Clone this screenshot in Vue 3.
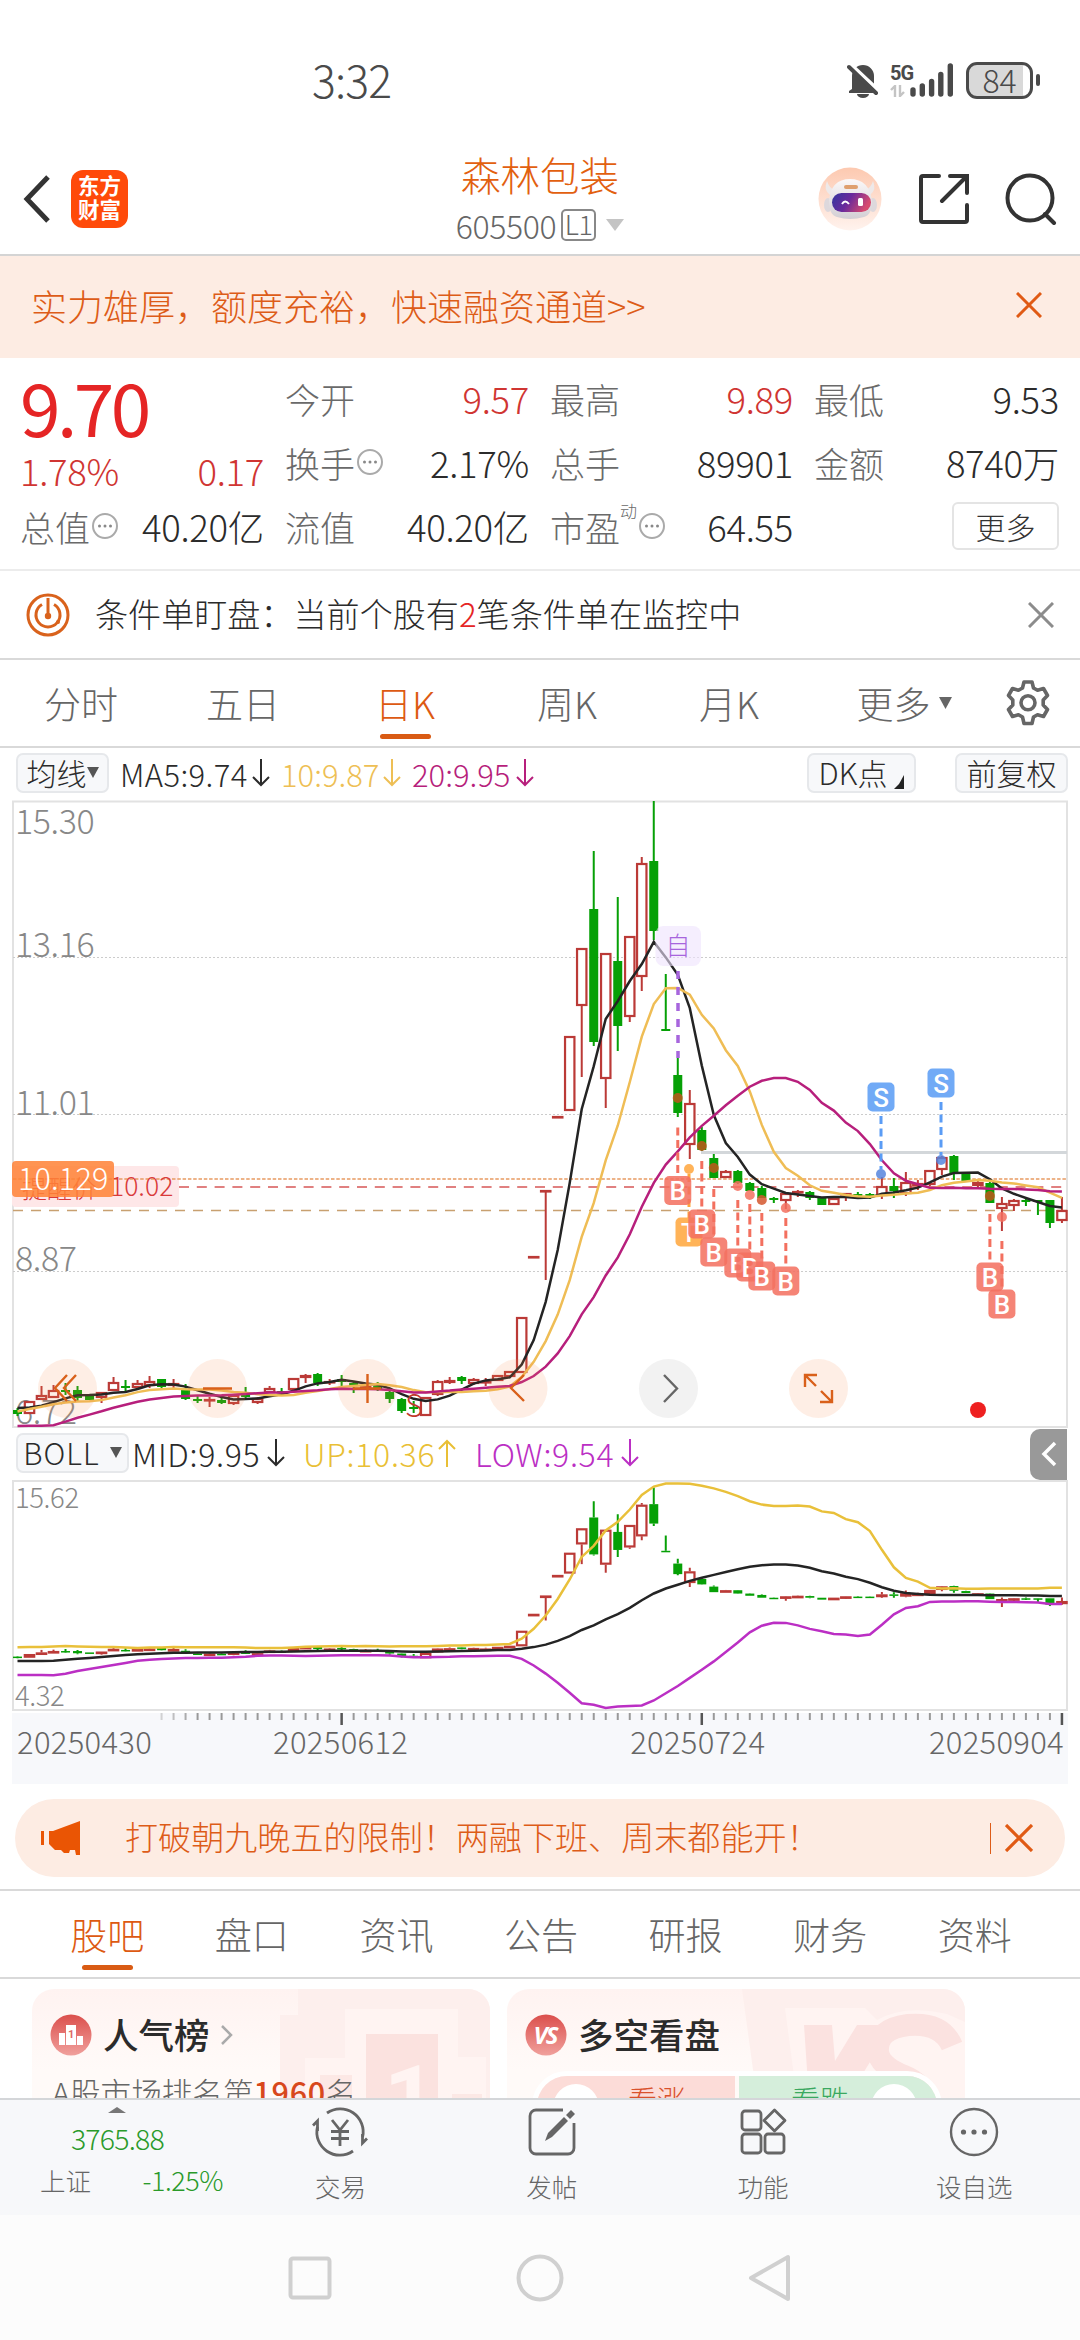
<template>
  <div class="screen">
    <header class="status-bar">
      <span class="clock">3:32</span>
      <div class="status-icons">
        <svg class="bell" width="32" height="36" viewBox="0 0 32 36">
          <path d="M5 27V14a11 11 0 0 1 22 0v13l3 2v2H2v-2z" fill="#4a4a4a" />
          <path d="M10 32h12a6 4 0 0 1-12 0" fill="#4a4a4a" />
          <path d="M1 0L32 29" stroke="#fff" stroke-width="4" />
          <path d="M2 5L29 31" stroke="#4a4a4a" stroke-width="4" stroke-linecap="round" />
        </svg>
        <div class="network">
          <b>5G</b>
          <svg width="15" height="12" viewBox="0 0 15 12" fill="none" stroke="#c4c4c4" stroke-width="2.4">
            <path d="M1 5l4-4v11M14 7l-4 4V0" />
          </svg>
        </div>
        <svg class="signal" width="44" height="34" viewBox="0 0 44 34" stroke="#4a4a4a" stroke-width="5.4" stroke-linecap="round">
          <path d="M3 27v4M12.3 23v8M21.6 18.500v12.500M30.800 11.500v19.500M40.300 3v28" />
        </svg>
        <div class="battery"><span>84</span></div>
        <i class="battery-nub"></i>
      </div>
    </header>

    <nav class="title-bar">
      <div class="title-left">
        <svg width="28" height="48" viewBox="0 0 28 48" fill="none" stroke="#333" stroke-width="5">
          <path d="M25 2L4 24l21 22" />
        </svg>
        <div class="logo"><span>东方</span><span>财富</span></div>
      </div>
      <div class="title-mid">
        <div class="stock-name">森林包装</div>
        <div class="stock-code">
          <span>605500</span><em>L1</em>
          <svg width="18" height="12" viewBox="0 0 18 12"><path d="M0 0h18l-9 12z" fill="#c4c4c4" /></svg>
        </div>
      </div>
      <div class="title-right">
        <svg width="64" height="64" viewBox="0 0 64 64">
          <defs>
            <linearGradient id="halo" x1="0" y1="0" x2="0" y2="1">
              <stop offset="0" stop-color="#fdc9b0" />
              <stop offset="1" stop-color="#fff3ee" />
            </linearGradient>
            <linearGradient id="visor" x1="0" y1="0" x2="1" y2=".3">
              <stop offset="0" stop-color="#33369f" />
              <stop offset=".5" stop-color="#6a2a9c" />
              <stop offset="1" stop-color="#d64a70" />
            </linearGradient>
            <linearGradient id="shell" x1="0" y1="0" x2="0" y2="1">
              <stop offset="0" stop-color="#fbf8f8" />
              <stop offset="1" stop-color="#d3cfd4" />
            </linearGradient>
          </defs>
          <circle cx="32" cy="32" r="31.500" fill="url(#halo)" />
          <path d="M9 14q-4 9 3 14l5-5q-6-2-8-9M55 14q4 9-3 14l-5-5q6-2 8-9" fill="#eee9e9" />
          <ellipse cx="10" cy="38" rx="4" ry="7" fill="#ddd8dc" />
          <ellipse cx="55" cy="38" rx="4" ry="7" fill="#ddd8dc" />
          <path d="M11 34q2-22 21-22t22 22q0 14-8 16-14 4-27 0-8-2-8-16" fill="url(#shell)" />
          <rect x="26" y="18" width="14" height="4" rx="2" fill="#dfa06f" />
          <rect x="14" y="26" width="39" height="19" rx="9.500" fill="url(#visor)" />
          <path d="M24 37q3-5 7 0" fill="none" stroke="#fff" stroke-width="2" />
          <rect x="40" y="31" width="5" height="8" rx="1.500" fill="#fff" />
        </svg>
        <svg class="share" width="50" height="50" viewBox="0 0 50 50" fill="none" stroke="#333" stroke-width="4" stroke-linecap="round">
          <path d="M20 2H4a2 2 0 0 0-2 2v42a2 2 0 0 0 2 2h42a2 2 0 0 0 2-2V31M31 2h17v17M48 2L23 27" />
        </svg>
        <svg width="52" height="52" viewBox="0 0 52 52" fill="none" stroke="#333" stroke-width="4" stroke-linecap="round">
          <circle cx="25" cy="25" r="22.500" />
          <path d="M40 41l9 9" />
        </svg>
      </div>
    </nav>

    <section class="banner">
      <span>实力雄厚，额度充裕，快速融资通道&gt;&gt;</span>
      <svg width="26" height="26" viewBox="0 0 26 26" stroke="#e05a14" stroke-width="3"><path d="M1 1l24 24M25 1L1 25" /></svg>
    </section>

    <section class="quote">
      <div class="quote-col main">
        <div class="price">9.70</div>
        <div class="cell change"><span class="up">1.78%</span><span class="up">0.17</span></div>
        <div class="cell"><label>总值<Dots /></label><span>40.20亿</span></div>
      </div>
      <div v-for="(col, c) in quoteCols" :key="c" class="quote-col">
        <div v-for="item in col" :key="item.label" class="cell">
          <label>{{ item.label }}<sup v-if="item.sup">{{ item.sup }}</sup><Dots v-if="item.tip" /></label>
          <span :class="{ up: item.up }">{{ item.value }}</span>
        </div>
        <div v-if="col.length < 3" class="cell more"><button>更多</button></div>
      </div>
    </section>

    <section class="monitor">
      <svg width="44" height="44" viewBox="0 0 44 44" fill="none" stroke="#d9621c" stroke-width="3">
        <circle cx="22" cy="22" r="20" />
        <path d="M16 11.500a12 12 0 1 0 12 0" />
        <path d="M22 5v15" />
        <circle cx="22" cy="23" r="3.200" fill="#d9621c" stroke="none" />
        <circle cx="32" cy="29" r="2" fill="#d9621c" stroke="none" />
      </svg>
      <p>条件单盯盘：当前个股有<b>2</b>笔条件单在监控中</p>
      <svg width="26" height="26" viewBox="0 0 26 26" stroke="#8c8c8c" stroke-width="3"><path d="M1 1l24 24M25 1L1 25" /></svg>
    </section>

    <nav class="periods">
      <div v-for="p in periods" :key="p" :class="['period', { active: p === '日K' }]">
        {{ p }}<svg v-if="p === '更多'" width="13" height="12" viewBox="0 0 13 12"><path d="M0 0h13L6.500 12z" fill="#666" /></svg>
      </div>
      <svg class="gear" width="44" height="46" viewBox="0 0 44 46" fill="none" stroke="#666" stroke-width="3.600" stroke-linejoin="round">
        <path d="M18 2h8l1.500 6 4 2.300 6-1.800 4 7-4.300 4.500v5l4.300 4.500-4 7-6-1.800-4 2.300-1.500 6.500h-8L16.500 37l-4-2.300-6 1.800-4-7L6.800 25v-5l-4.300-4.500 4-7 6 1.800 4-2.300z" />
        <circle cx="22" cy="22.800" r="7" />
      </svg>
    </nav>

    <section class="legend ma">
      <span class="chip ma-chip">均线<i class="tri"></i></span>
      <span class="ind k">MA5:9.74<Arrow /></span>
      <span class="ind y">10:9.87<Arrow /></span>
      <span class="ind m">20:9.95<Arrow /></span>
      <span class="chip dk">DK点<i class="corner"></i></span>
      <span class="chip fq">前复权</span>
    </section>

    <svg class="k-chart" width="1080" height="628" viewBox="0 800 1080 628">
      <rect x="13" y="801.500" width="1054" height="625.500" fill="none" stroke="#e2e2e2" stroke-width="2" />
      <path d="M13 957.500h1054M13 1114.500h1054M13 1271.500h1054" stroke="#ccc" stroke-dasharray="2 2" />
      <path d="M701 1152.500H1067" stroke="#d3d7da" stroke-width="3" />
      <path d="M13 1210.500H1067" stroke="#c8a070" stroke-width="1.300" stroke-dasharray="10 8" />
      <rect x="12" y="1166" width="167" height="41" rx="4" fill="#fee7e8" />
      <path d="M179 1187H1067" stroke="#e08080" stroke-width="2" stroke-dasharray="10 7.800" />
      <path d="M13 1179H1067" stroke="#e89a62" stroke-width="1.700" stroke-dasharray="3.500 1.800" />
      <g class="scale">
        <text x="15" y="834">15.30</text>
        <text x="15" y="957">13.16</text>
        <text x="15" y="1115">11.01</text>
        <text x="15" y="1271">8.87</text>
        <text x="15" y="1424">6.72</text>
      </g>
      <text class="remind" x="22" y="1198">提醒价</text>
      <text class="remind num" x="110" y="1196">10.02</text>
      <rect x="12" y="1161" width="102" height="36" rx="4" fill="#ff8237" fill-opacity=".86" />
      <text class="cost" x="18" y="1190">10.129</text>

      <g v-for="b in candles" :key="b.i">
        <path :d="`M${b.x} ${b.high}V${b.top}M${b.x} ${b.bottom}V${b.low}`" :stroke="b.color" stroke-width="2" />
        <rect v-if="b.red" :x="b.x - 4.700" :y="b.top + 1" width="9.400" :height="Math.max(b.bottom - b.top - 2, .5)" fill="#fff" :stroke="b.color" stroke-width="2.200" />
        <rect v-else :x="b.x - 4.500" :y="b.top" width="9" :height="Math.max(b.bottom - b.top, 2)" :fill="b.color" />
      </g>
      <g clip-path="url(#k-clip)" fill="none" stroke-width="2.500">
        <polyline :points="line(ma5)" stroke="#242424" />
        <polyline :points="line(ma10)" stroke="#efbd55" />
        <polyline :points="line(ma20)" stroke="#b71f7c" />
      </g>
      <clipPath id="k-clip"><rect x="13" y="801" width="1054" height="627" /></clipPath>
      <text x="405" y="1417" class="s-mark">S</text>

      <g v-for="m in marks" :key="m.x + m.t">
        <path :d="`M${m.x} ${m.from}V${m.to}`" :stroke="m.c" stroke-width="3" stroke-dasharray="8 4.500" />
        <circle :cx="m.x" :cy="m.dot" r="5" :fill="m.d || m.c" fill-opacity=".85" />
        <rect :x="m.x - 13.500" :y="m.y - 14.500" width="27" height="29" rx="5" :fill="m.c" fill-opacity=".86" />
        <text :x="m.x" :y="m.y + 9.500" class="mark-text">{{ m.t }}</text>
      </g>
      <rect x="655.500" y="926" width="45.500" height="40" rx="8" fill="#efe2fd" fill-opacity=".6" />
      <text x="678" y="955" class="self-mark">自</text>
      <path d="M678 971V1058" stroke="#a765dd" stroke-width="3.500" stroke-dasharray="8 8" />

      <g fill="#fb8a50" fill-opacity=".15">
        <circle v-for="cx in [67.5, 217.500, 367.500, 518, 818.500]" :key="cx" :cx="cx" cy="1388.500" r="29.500" />
      </g>
      <circle cx="668.500" cy="1388.500" r="29.500" fill="#f2f2f2" />
      <g fill="none" stroke="#d9601a" stroke-width="2.400">
        <path d="M67 1375l-12 13 12 13M76 1375l-12 13 12 13" />
        <path d="M203 1388.500h29M353 1388.500h28M367.500 1374v29" />
        <path d="M524 1375l-13 13 13 13" />
        <path d="M664 1375l13 13.500-13 13.500" stroke="#666" />
        <path d="M805 1387v-12h12M806 1376l10 10M832 1390v12h-12M831 1401l-10-10" />
      </g>
      <circle cx="978" cy="1410" r="8" fill="#ee2020" />
    </svg>

    <section class="legend boll">
      <span class="chip boll-chip">BOLL<i class="tri"></i></span>
      <span class="ind k">MID:9.95<Arrow /></span>
      <span class="ind g">UP:10.36<Arrow up /></span>
      <span class="ind p">LOW:9.54<Arrow /></span>
      <span class="collapse">
        <svg width="16" height="26" viewBox="0 0 16 26" fill="none" stroke="#fff" stroke-width="3.500"><path d="M14 2L3 13l11 11" /></svg>
      </span>
    </section>

    <svg class="boll-chart" width="1080" height="232" viewBox="0 1480 1080 232">
      <rect x="13" y="1481" width="1054" height="229" fill="none" stroke="#e2e2e2" stroke-width="2" />
      <g class="scale small">
        <text x="15" y="1508">15.62</text>
        <text x="15" y="1706">4.32</text>
      </g>
      <g v-for="b in bollCandles" :key="b.i">
        <path :d="`M${b.x} ${b.high}V${b.top}M${b.x} ${b.bottom}V${b.low}`" :stroke="b.color" stroke-width="2" />
        <rect v-if="b.red" :x="b.x - 4.700" :y="b.top + 1" width="9.400" :height="Math.max(b.bottom - b.top - 2, .5)" fill="#fff" :stroke="b.color" stroke-width="2.200" />
        <rect v-else :x="b.x - 4.500" :y="b.top" width="9" :height="Math.max(b.bottom - b.top, 1.500)" :fill="b.color" />
      </g>
      <g clip-path="url(#boll-clip)" fill="none" stroke-width="2.500">
        <polyline :points="line(boll.mid)" stroke="#242424" />
        <polyline :points="line(boll.up)" stroke="#e9c03a" />
        <polyline :points="line(boll.low)" stroke="#bb2fc4" />
      </g>
      <clipPath id="boll-clip"><rect x="13" y="1480" width="1054" height="231" /></clipPath>
    </svg>

    <section class="axis">
      <svg width="1056" height="14" viewBox="12 0 1056 14">
        <path v-for="t in ticks" :key="t.x" :d="`M${t.x} 0V${t.major ? 12 : 7}`" :stroke="t.major ? '#555' : '#999'" :stroke-width="t.major ? 2.500 : 2" :opacity="t.opacity" />
      </svg>
      <div class="dates">
        <span>20250430</span><span class="d2">20250612</span><span class="d3">20250724</span><span class="d4">20250904</span>
      </div>
    </section>

    <section class="notice">
      <svg width="40" height="34" viewBox="0 0 40 34" fill="#ea5504">
        <path d="M39 0v34h-4l-1-5h-5l-1 3h-5l-3-3h-6l-6-6V10h4z" />
        <path d="M0 10h3v14H0z" />
      </svg>
      <p>打破朝九晚五的限制！两融下班、周末都能开！</p>
      <i></i>
      <svg width="28" height="28" viewBox="0 0 28 28" stroke="#e05a14" stroke-width="3.200"><path d="M1 1l26 26M27 1L1 27" /></svg>
    </section>

    <nav class="tabs">
      <div v-for="(t, n) in tabs" :key="t" :class="['tab', { active: n === 0 }]">{{ t }}</div>
    </nav>

    <section class="cards">
      <div class="card">
        <svg class="watermark" width="458" height="110" viewBox="32 1989 458 110">
          <path d="M298 1989h192v110H280v-84h18z" fill="#fdefed" />
          <path d="M345 2009h113v48h28v42H305v-41h40z" fill="#fff4f2" />
          <path d="M366 2034h72v65h-72z" fill="#fbe2df" />
          <path d="M320 2075h32v24h-32zM452 2094h30v5h-30z" fill="#fce8e5" />
          <text x="384" y="2130" class="wm-one">1</text>
        </svg>
        <h3>
          <svg width="42" height="42" viewBox="0 0 42 42">
            <circle cx="21" cy="21" r="20.500" fill="url(#badge)" />
            <path d="M9 19h6v12H9zM16 11h10v20H16zM27 22h6v9h-6z" fill="#fff" />
            <text x="18" y="24" class="badge-one">1</text>
          </svg>
          <span>人气榜</span>
          <svg class="chev" width="12" height="20" viewBox="0 0 12 20" fill="none" stroke="#aaa" stroke-width="2.500"><path d="M1 1l9 9-9 9" /></svg>
        </h3>
        <p class="rank">A股市场排名第<b>1960</b>名</p>
      </div>
      <div class="card">
        <svg class="watermark" width="458" height="110" viewBox="507 1989 458 110">
          <path d="M742 1989h223v110H757z" fill="#fdefed" />
          <path d="M785 2008h80l12 12q28-16 70-6l18 8v77H797z" fill="#fff4f2" />
          <path d="M804 2025h28l3 36 22-36h36l-46 74h-38z" fill="#fbe2e0" />
          <path d="M952 2046q-10-24-44-21-32 4-30 27 2 14 26 24 20 8 16 20" fill="none" stroke="#fbe2e0" stroke-width="22" />
        </svg>
        <h3>
          <svg width="42" height="42" viewBox="0 0 42 42">
            <defs>
              <linearGradient id="badge" x1="0" y1="0" x2="0" y2="1">
                <stop offset="0" stop-color="#db4f4c" />
                <stop offset="1" stop-color="#f0a09c" />
              </linearGradient>
            </defs>
            <circle cx="21" cy="21" r="20.500" fill="url(#badge)" />
            <text x="20" y="30" class="badge-vs">VS</text>
          </svg>
          <span>多空看盘</span>
        </h3>
        <div class="vote">
          <div class="bull"><i></i><span>看涨</span></div>
          <div class="bear"><span>看跌</span><i></i></div>
        </div>
      </div>
    </section>

    <footer class="toolbar">
      <div class="index">
        <i></i>
        <span class="index-value">3765.88</span>
        <div class="index-row"><span>上证</span><span class="down">-1.25%</span></div>
      </div>
      <div class="tool">
        <svg width="56" height="50" viewBox="0 0 56 50" fill="none" stroke="#666" stroke-width="2.800">
          <path d="M15 6a23 23 0 0 1 35.600 24M41 44A23 23 0 0 1 5.400 20" />
          <path d="M5.500 24V14L1 18.500M50.500 27v9l4.500-4.500" />
          <path d="M20 13l8 10 8-10M28 23v16M19 24.500h18M19 31.500h18" />
        </svg>
        <span>交易</span>
      </div>
      <div class="tool">
        <svg width="50" height="50" viewBox="0 0 50 50" fill="none" stroke="#666" stroke-width="2.800">
          <path d="M36 3H9a6 6 0 0 0-6 6v32a6 6 0 0 0 6 6h32a6 6 0 0 0 6-6V16" />
          <path d="M18 34l3-8 16-16 4 4-16 16zM39 8l5-5 4 4-5 5z" fill="#666" stroke="none" />
        </svg>
        <span>发帖</span>
      </div>
      <div class="tool">
        <svg width="50" height="50" viewBox="0 0 50 50" fill="none" stroke="#666" stroke-width="2.800" stroke-linejoin="round">
          <rect x="4" y="4" width="19" height="19" rx="3" />
          <rect x="4" y="27" width="19" height="19" rx="3" />
          <rect x="27" y="27" width="19" height="19" rx="3" />
          <path d="M36.500 3L47 13.500 36.500 24 26 13.500z" />
        </svg>
        <span>功能</span>
      </div>
      <div class="tool">
        <svg width="50" height="50" viewBox="0 0 50 50" fill="none" stroke="#666" stroke-width="2.400">
          <circle cx="25" cy="25" r="23" />
          <g fill="#666" stroke="none">
            <circle cx="14.500" cy="25" r="2.600" />
            <circle cx="25" cy="25" r="2.600" />
            <circle cx="35.500" cy="25" r="2.600" />
          </g>
        </svg>
        <span>设自选</span>
      </div>
    </footer>

    <div class="system-nav">
      <svg width="48" height="48" viewBox="0 0 48 48"><rect x="4.500" y="4.500" width="39" height="39" rx="2.500" /></svg>
      <svg width="48" height="48" viewBox="0 0 48 48"><circle cx="24" cy="24" r="21.500" /></svg>
      <svg width="48" height="48" viewBox="0 0 48 48"><path d="M42 3v42L5 24z" /></svg>
    </div>
  </div>
</template>

<script setup>
import { h } from 'vue'

const Arrow = (props) =>
  h('svg', { width: 18, height: 28, viewBox: '0 0 18 28', fill: 'none', stroke: 'currentColor', 'stroke-width': 2 }, [
    h('path', { d: props.up !== undefined ? 'M9 28V2M1 10l8-8 8 8' : 'M9 0v26M1 18l8 8 8-8' })
  ])
Arrow.props = ['up']

const Dots = () =>
  h('svg', { width: 29, height: 28, viewBox: '0 0 29 28' }, [
    h('circle', { cx: 15, cy: 14, r: 12, fill: 'none', stroke: '#aaa', 'stroke-width': 2 }),
    ...[9.5, 15, 20.5].map((cx) => h('circle', { cx, cy: 14, r: 1.5, fill: '#888' }))
  ])

const quoteCols = [
  [
    { label: '今开', value: '9.57', up: true },
    { label: '换手', value: '2.17%', tip: true },
    { label: '流值', value: '40.20亿' }
  ],
  [
    { label: '最高', value: '9.89', up: true },
    { label: '总手', value: '89901' },
    { label: '市盈', value: '64.55', sup: '动', tip: true }
  ],
  [
    { label: '最低', value: '9.53' },
    { label: '金额', value: '8740万' }
  ]
]

const periods = ['分时', '五日', '日K', '周K', '月K', '更多']
const tabs = ['股吧', '盘口', '资讯', '公告', '研报', '财务', '资料']

// [r = rising / g = falling, high, body top, body bottom, low]
const bars = [
  ['g', 1408, 1410, 1414, 1416], ['r', 1401, 1401, 1414, 1414], ['r', 1386, 1395, 1400, 1400],
  ['r', 1385, 1390, 1398, 1398], ['g', 1383, 1390, 1392, 1395], ['g', 1386, 1390, 1398, 1402],
  ['g', 1395, 1395, 1400, 1400], ['r', 1392, 1392, 1398, 1403], ['r', 1377, 1382, 1391, 1391],
  ['g', 1380, 1386, 1388, 1391], ['r', 1380, 1383, 1388, 1389], ['r', 1376, 1381, 1386, 1388],
  ['g', 1379, 1379, 1387, 1388], ['r', 1379, 1383, 1386, 1390], ['g', 1384, 1389, 1399, 1400],
  ['g', 1396, 1399, 1401, 1403], ['r', 1397, 1399, 1400, 1407], ['g', 1398, 1400, 1403, 1404],
  ['r', 1394, 1395, 1404, 1405], ['g', 1387, 1395, 1397, 1400], ['r', 1397, 1398, 1403, 1404],
  ['r', 1386, 1388, 1393, 1393], ['g', 1388, 1391, 1393, 1394], ['r', 1378, 1378, 1390, 1390],
  ['r', 1374, 1375, 1378, 1383], ['g', 1373, 1374, 1383, 1386], ['r', 1379, 1381, 1383, 1385],
  ['g', 1375, 1379, 1382, 1386], ['g', 1382, 1383, 1386, 1393], ['r', 1384, 1386, 1388, 1390],
  ['g', 1382, 1386, 1389, 1391], ['g', 1391, 1392, 1399, 1403], ['g', 1398, 1399, 1411, 1413],
  ['g', 1401, 1407, 1409, 1413], ['r', 1397, 1397, 1416, 1416], ['r', 1380, 1381, 1395, 1396],
  ['r', 1377, 1380, 1383, 1384], ['g', 1376, 1377, 1381, 1384], ['r', 1378, 1379, 1384, 1385],
  ['r', 1378, 1381, 1383, 1386], ['r', 1375, 1375, 1381, 1381], ['r', 1371, 1371, 1377, 1377],
  ['r', 1317, 1317, 1373, 1373], ['r', 1256, 1256, 1258, 1258], ['r', 1190, 1190, 1192, 1280],
  ['r', 1116, 1116, 1118, 1118], ['r', 1036, 1036, 1111, 1111], ['r', 948, 948, 1006, 1077],
  ['g', 851, 909, 1042, 1046], ['r', 953, 953, 1079, 1108], ['g', 897, 961, 1026, 1051],
  ['r', 936, 936, 1017, 1022], ['r', 857, 863, 977, 991], ['g', 801, 861, 931, 940],
  ['g', 974, 1029, 1031, 1031], ['g', 1058, 1075, 1113, 1117], ['r', 1090, 1103, 1145, 1159],
  ['g', 1127, 1130, 1150, 1151], ['g', 1154, 1158, 1178, 1178], ['r', 1170, 1171, 1178, 1178],
  ['g', 1170, 1171, 1183, 1184], ['g', 1182, 1183, 1191, 1191], ['g', 1186, 1188, 1198, 1198],
  ['g', 1197, 1198, 1200, 1203], ['r', 1192, 1193, 1201, 1209], ['r', 1190, 1191, 1193, 1197],
  ['g', 1191, 1192, 1198, 1200], ['g', 1198, 1198, 1205, 1205], ['r', 1198, 1198, 1205, 1205],
  ['r', 1193, 1193, 1195, 1201], ['g', 1192, 1194, 1196, 1197], ['g', 1193, 1194, 1196, 1199],
  ['r', 1177, 1186, 1196, 1199], ['g', 1178, 1186, 1191, 1198], ['r', 1172, 1182, 1194, 1196],
  ['r', 1180, 1183, 1186, 1190], ['r', 1170, 1170, 1185, 1186], ['r', 1156, 1157, 1170, 1175],
  ['g', 1155, 1156, 1173, 1180], ['g', 1173, 1174, 1181, 1181], ['r', 1181, 1182, 1186, 1188],
  ['g', 1182, 1183, 1203, 1203], ['r', 1197, 1203, 1209, 1231], ['r', 1199, 1200, 1206, 1211],
  ['g', 1197, 1200, 1202, 1206], ['g', 1200, 1200, 1202, 1215], ['g', 1200, 1200, 1223, 1228],
  ['r', 1197, 1210, 1221, 1223]
]

// closes of the sessions just before the visible range
const history = [7.0, 7.15, 7.1, 6.2, 6.05, 6.25, 6.3, 6.35, 6.45, 6.5, 6.75, 6.85, 6.9, 6.95, 7.0, 7.05, 7.05, 6.98, 6.95]

const barX = (i) => 17.5 + 12.005 * i
const toPrice = (y) => 15.3 - (y - 801) / 73
const kY = (p) => 801 + (15.3 - p) * 73
const bollY = (p) => 1481 + (15.62 - p) * 20.27

const candles = bars.map(([dir, high, top, bottom, low], i) => ({
  i, x: barX(i), red: dir === 'r', color: dir === 'r' ? '#bb3a37' : '#06a006', high, top, bottom, low
}))

const bollCandles = candles.map((b) => ({
  ...b,
  high: bollY(toPrice(b.high)),
  top: bollY(toPrice(b.top)),
  bottom: bollY(toPrice(b.bottom)),
  low: bollY(toPrice(b.low))
}))

const closes = [...history, ...candles.map((b) => toPrice(b.red ? b.top : b.bottom))]
const mean = (list) => list.reduce((a, b) => a + b, 0) / list.length
const windowAt = (i, n) => closes.slice(i + 20 - n, i + 20)
const average = (n) => candles.map((b) => kY(mean(windowAt(b.i, n))))

const ma5 = average(5)
const ma10 = average(10)
const ma20 = average(20)

const boll = { mid: [], up: [], low: [] }
candles.forEach((b) => {
  const w = windowAt(b.i, 20)
  const m = mean(w)
  const sd = Math.sqrt(mean(w.map((v) => (v - m) ** 2)))
  boll.mid.push(bollY(m))
  boll.up.push(Math.max(bollY(m + 2 * sd), 1481))
  boll.low.push(Math.min(bollY(m - 2 * sd), 1710))
})

const line = (ys) => ys.map((y, i) => `${barX(i).toFixed(1)},${y.toFixed(1)}`).join(' ')

const buy = (i, y, dot, d) => ({ x: barX(i), y, dot, from: y - 63, to: y - 14, t: 'B', c: '#f3705f', d })
const marks = [
  { x: 689, y: 1232, dot: 1169, from: 1174, to: 1218, t: 'T', c: '#ffa63c' },
  buy(55, 1190.5, 1098, '#c0561c'),
  buy(57, 1224, 1146, '#c0561c'),
  buy(58, 1252, 1168, '#c0561c'),
  buy(60, 1263, 1186),
  buy(61, 1267, 1195),
  buy(62, 1276, 1200, '#d3572e'),
  buy(64, 1281, 1208),
  buy(81, 1277, 1196, '#c0561c'),
  buy(82, 1304, 1217),
  { x: 881, y: 1097, dot: 1174, from: 1116, to: 1169, t: 'S', c: '#5a9cf5', d: '#5585dd' },
  { x: 941, y: 1083, dot: 1160, from: 1102, to: 1155, t: 'S', c: '#5a9cf5', d: '#5585dd' }
]

const ticks = candles.slice(12).map((b) => ({
  x: b.x,
  major: [27, 57, 87].includes(b.i),
  opacity: Math.min(1, (b.i - 10) / 5)
}))
</script>

<style>
body {
  margin: 0;
  background: #fff;
}
</style>

<style scoped>
.screen {
  width: 1080px;
  height: 2340px;
  overflow: hidden;
  display: flex;
  flex-direction: column;
  background: #fff;
  color: #2b2b2b;
  font-family: "Noto Sans CJK SC", "Noto Sans", sans-serif;
  font-weight: 300;
}

.screen > * {
  flex-shrink: 0;
  box-sizing: border-box;
}

svg {
  display: block;
  flex-shrink: 0;
}

i,
em {
  font-style: normal;
}

p,
h3 {
  margin: 0;
  font-weight: inherit;
}

.status-bar {
  height: 151px;
  padding: 14px 40px 0 312px;
  display: flex;
  justify-content: space-between;
  align-items: flex-start;
  color: #4a4a4a;
}

.clock {
  font-size: 44.5px;
  letter-spacing: -.8px;
  line-height: 130px;
}

.status-icons {
  display: flex;
  align-items: center;
  height: 132px;
}

.network {
  width: 24px;
  margin: 0 -4px 0 11px;
}

.network b {
  display: block;
  font: bold 20px/20px "Roboto", sans-serif;
  letter-spacing: -1px;
}

.network svg {
  margin-top: 2px;
}

.signal {
  margin: 0 12px 0 0;
}

.battery {
  width: 67px;
  height: 37px;
  box-sizing: border-box;
  border: 3px solid #4a4a4a;
  border-radius: 11px;
  background: linear-gradient(90deg, #d9d9d9 88%, #fff 88%);
  text-align: center;
  font-size: 32px;
  line-height: 28px;
}

.battery-nub {
  width: 4px;
  height: 12px;
  margin-left: 3px;
  border-radius: 2px;
  background: #4a4a4a;
}

.title-bar {
  height: 105px;
  padding: 0 23px;
  display: grid;
  grid-template-columns: 1fr 300px 1fr;
  border-bottom: 2px solid #d4d4d4;
}

.title-left,
.title-right {
  display: flex;
  align-items: center;
  height: 95px;
}

.logo {
  width: 57px;
  height: 58px;
  box-sizing: border-box;
  margin-left: 20px;
  padding-bottom: 3px;
  border-radius: 12px;
  background: #ff4a0a;
  color: #fff;
  font-size: 21.5px;
  font-weight: 700;
  line-height: 24px;
  display: flex;
  flex-direction: column;
  align-items: center;
  justify-content: center;
}

.title-mid {
  text-align: center;
}

.stock-name {
  margin-top: -3px;
  color: #e2600f;
  font-size: 39.5px;
  line-height: 52px;
}

.stock-code {
  display: flex;
  align-items: center;
  justify-content: center;
  margin-top: 3px;
  color: #666;
  font-size: 32px;
  letter-spacing: -.4px;
  line-height: 44px;
}

.stock-code em {
  margin: 0 10px 0 5px;
  width: 31px;
  height: 28px;
  border: 2px solid #888;
  border-radius: 5px;
  font-size: 27px;
  line-height: 26px;
}

.title-right {
  justify-content: flex-end;
}

.share {
  margin: 0 36px 0 37px;
}

.banner {
  height: 102px;
  padding: 0 38px 4px 31px;
  display: flex;
  align-items: center;
  justify-content: space-between;
  background: #fdece3;
  color: #dd5c18;
  font-size: 36px;
}

.quote {
  height: 213px;
  padding: 8px 22px 0 20px;
  display: grid;
  grid-template-columns: 244px 244px 243px 245px;
  column-gap: 21px;
  border-bottom: 2px solid #ececec;
}

.cell {
  height: 64px;
  display: flex;
  align-items: center;
  justify-content: space-between;
  font-size: 36.5px;
  letter-spacing: -.3px;
  white-space: nowrap;
}

.cell label {
  display: flex;
  align-items: center;
  color: #6a6a6a;
  font-size: 35px;
  letter-spacing: 0;
}

.cell sup {
  align-self: flex-start;
  font-size: 17px;
  line-height: 20px;
}

.up {
  color: #d03532;
}

.main .price {
  height: 74px;
  margin-bottom: -2px;
  color: #e52525;
  font-size: 73px;
  font-weight: 400;
  letter-spacing: -3.5px;
  line-height: 78px;
}

.main .change {
  height: 60px;
  margin-bottom: -4px;
  padding-top: 4px;
  box-sizing: border-box;
}

.more {
  justify-content: flex-end;
}

.more button {
  width: 107px;
  height: 48px;
  padding: 0;
  border: 2px solid #e4e4e4;
  border-radius: 6px;
  background: #fff;
  color: #333;
  font: 300 30px/41px "Noto Sans CJK SC", sans-serif;
}

.monitor {
  height: 89px;
  padding: 0 26px 0 26px;
  display: flex;
  align-items: center;
  border-bottom: 2px solid #d9d9d9;
  font-size: 33.1px;
}

.monitor p {
  flex: 1;
  margin: 0 0 4px 25px;
}

.monitor b {
  color: #e52525;
  font-weight: 300;
}

.periods {
  height: 88px;
  display: flex;
  align-items: center;
  border-bottom: 2px solid #d9d9d9;
}

.period {
  width: 162px;
  height: 86px;
  position: relative;
  display: flex;
  align-items: center;
  justify-content: center;
  color: #666;
  font-size: 37px;
}

.period svg {
  margin-left: 8px;
}

.period:nth-child(6) {
  width: 188px;
}

.period.active,
.tab.active {
  color: #dd5a12;
}

.period.active::after,
.tab.active::after {
  content: "";
  position: absolute;
  bottom: 7px;
  left: calc(50% - 25.5px);
  width: 51px;
  height: 5px;
  border-radius: 3px;
  background: #d95b14;
}

.gear {
  margin-left: 8px;
}

.legend {
  height: 53px;
  padding: 0 12px 3px 16px;
  display: flex;
  align-items: center;
  font-size: 31px;
}

.chip {
  height: 40px;
  box-sizing: border-box;
  padding-bottom: 2px;
  display: flex;
  align-items: center;
  justify-content: center;
  border: 2px solid #e6e8eb;
  border-radius: 7px;
  background: #f7f8fa;
  font-size: 30px;
}

.tri {
  border: 6.5px solid transparent;
  border-top: 11px solid #555;
  border-bottom: 0;
}

.ma-chip {
  width: 93px;
}

.ind {
  display: flex;
  align-items: center;
  justify-content: space-between;
  white-space: nowrap;
}

.k {
  width: 150px;
  margin-left: 11px;
  letter-spacing: .4px;
}

.y {
  width: 120px;
  margin-left: 11px;
  color: #eebf55;
}

.ma .m {
  width: 122px;
  margin-left: 11px;
  color: #b71f7c;
}

.dk {
  width: 109px;
  margin-left: auto;
  gap: 7px;
}

.corner {
  margin-top: 20px;
  border: 5px solid #222;
  border-top: 9px solid transparent;
  border-left-color: transparent;
}

.fq {
  width: 113px;
  margin-left: 39px;
}

.k-chart {
  margin-top: -1px;
}

.boll {
  height: 52px;
  padding-right: 13px;
  padding-bottom: 2px;
  font-size: 32px;
  letter-spacing: .7px;
}

.boll-chip {
  width: 113px;
  gap: 10px;
  letter-spacing: 1px;
}

.boll .k {
  margin-left: 3px;
  width: 153px;
  letter-spacing: .7px;
}

.boll .g {
  width: 153px;
  margin-left: 18px;
  color: #e9bf35;
}

.boll .p {
  width: 164px;
  margin-left: 19px;
  color: #bb2fc4;
}

.collapse {
  width: 37px;
  height: 51px;
  margin-left: auto;
  margin-bottom: -2px;
  display: flex;
  align-items: center;
  justify-content: center;
  border-radius: 10px 0 0 10px;
  background: #999;
}

.scale {
  fill: #888;
  font-size: 34px;
  letter-spacing: -.4px;
}

.scale.small {
  font-size: 27.5px;
}

.remind {
  fill: #d93a3a;
  font-size: 25px;
}

.remind.num {
  font-size: 26.5px;
}

.cost {
  fill: #fff;
  font-size: 30.5px;
  letter-spacing: .2px;
}

.s-mark {
  fill: #c0392b;
  font-size: 31px;
}

.mark-text {
  fill: #fff;
  font: 500 26px "Roboto", sans-serif;
  text-anchor: middle;
}

.self-mark {
  fill: #a765dd;
  font-size: 25px;
  text-anchor: middle;
}

.axis {
  height: 71px;
  margin: 1px 12px 0;
  background: #f7f8fb;
}

.dates {
  display: flex;
  padding: 0 4px 0 5px;
  color: #666;
  font-size: 31px;
  letter-spacing: .3px;
  line-height: 28px;
}

.dates .d2 {
  margin-left: 121px;
}

.dates .d3 {
  margin-left: 222px;
}

.dates .d4 {
  margin-left: auto;
}

.notice {
  height: 78px;
  margin: 15px 15px 0;
  padding: 0 32px 0 26px;
  display: flex;
  align-items: center;
  border-radius: 39px;
  background: #fdece3;
  color: #dd5c18;
  font-size: 33.1px;
}

.notice p {
  flex: 1;
  margin: 0 0 4px 44px;
}

.notice i {
  width: 1.5px;
  height: 31px;
  margin-right: 14px;
  background: #dd5c18;
}

.tabs {
  height: 90px;
  margin-top: 12px;
  padding: 0 33px 0 35px;
  display: flex;
  border-top: 2px solid #d9d9d9;
  border-bottom: 2px solid #d9d9d9;
}

.tab {
  flex: 1;
  position: relative;
  display: flex;
  align-items: center;
  justify-content: center;
  color: #666;
  font-size: 37px;
}

.cards {
  height: 119px;
  padding: 10px 32px 0;
  display: flex;
  gap: 17px;
  overflow: hidden;
}

.card {
  width: 458px;
  height: 200px;
  position: relative;
  overflow: hidden;
  border-radius: 22px;
  background: linear-gradient(#fff3f1, #fffaf8 80px);
}

.watermark {
  position: absolute;
  top: 0;
  left: 0;
}

.card h3 {
  position: relative;
  display: flex;
  align-items: center;
  height: 42px;
  margin: 25px 0 0 18px;
  color: #2b2b2b;
  font-size: 35.5px;
  font-weight: 500;
  gap: 11px;
}

.card h3 span {
  margin-bottom: 4px;
}

.rank {
  position: relative;
  margin: 13px 0 0 20px;
  color: #666;
  font-size: 30.6px;
  line-height: 46px;
}

.rank b {
  color: #d8481c;
  font-weight: 500;
  letter-spacing: .6px;
}

.badge-one {
  fill: #dd6a67;
  font: bold 11px "Roboto", sans-serif;
}

.badge-vs {
  fill: #fff;
  font: italic bold 24px "Open Sans", sans-serif;
  letter-spacing: -2px;
  text-anchor: middle;
}

.wm-one {
  fill: #fff4f2;
  font: bold 90px "Roboto", sans-serif;
}

.vote {
  position: relative;
  width: 400px;
  height: 60px;
  margin: 15px 0 0 25px;
  border: 5px solid #fff;
  border-radius: 40px;
  display: flex;
  gap: 4px;
  overflow: hidden;
  font-size: 29px;
  line-height: 46px;
}

.vote div {
  flex: 1;
  display: flex;
  background: #fcdcd8;
  color: #d9512c;
}

.vote .bear {
  background: #d5eedb;
  color: #3aa860;
}

.vote i {
  width: 46px;
  height: 46px;
  margin: 8px 29px 0 16px;
  border-radius: 50%;
  background: #fff;
}

.bear span {
  margin-left: 52px;
}

.vote .bear i {
  margin: 8px 0 0 22px;
}

.toolbar {
  height: 117px;
  display: flex;
  border-top: 2px solid #d4d6d9;
  background: #f7f8fa;
  color: #666;
}

.index {
  width: 235px;
  display: flex;
  flex-direction: column;
  align-items: center;
}

.index i {
  margin-top: 7px;
  border: 9px solid transparent;
  border-top: 0;
  border-bottom: 6px solid #777;
}

.index-value {
  margin-top: 4px;
  color: #2a9a2a;
  font-size: 28.5px;
  letter-spacing: -.8px;
  line-height: 42px;
}

.index-row {
  width: 183px;
  margin-left: 28px;
  display: flex;
  justify-content: space-between;
  align-items: center;
  font-size: 25.5px;
  line-height: 42px;
}

.down {
  color: #2a9a2a;
  font-size: 27px;
  letter-spacing: -.5px;
}

.tool {
  width: 211.5px;
  display: flex;
  flex-direction: column;
  align-items: center;
  padding-top: 7px;
  font-size: 25.5px;
}

.tool span {
  margin-top: 9px;
  line-height: 40px;
}

.system-nav {
  flex: 1;
  display: flex;
  align-items: center;
  justify-content: center;
  gap: 182px;
  background: #fcfcfc;
}

.system-nav svg {
  fill: none;
  stroke: #d0d0d0;
  stroke-width: 4;
  stroke-linejoin: round;
}
</style>
